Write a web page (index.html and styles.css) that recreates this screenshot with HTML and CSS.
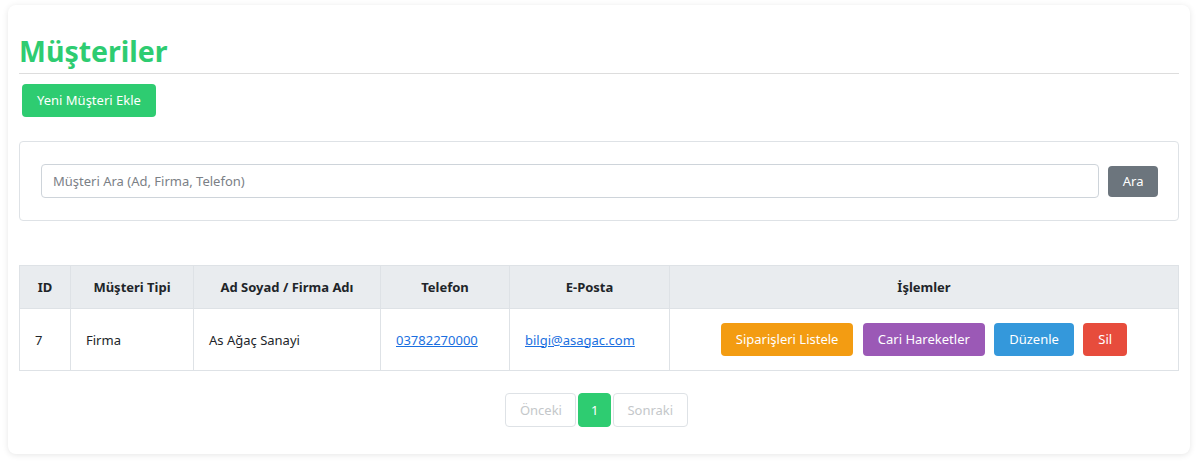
FILE: index.html
```html
<!DOCTYPE html>
<html lang="tr">
<head>
    <meta charset="UTF-8">
    <meta name="viewport" content="width=device-width, initial-scale=1.0">
    <link rel="stylesheet" href="styles.css">
</head>
<body>
    <div class="container">
        <h1 class="page-title">Müşteriler</h1>
        <button type="button" class="btn btn-green add-btn">Yeni Müşteri Ekle</button>

        <!-- Search -->
        <div class="search-card">
            <form class="search-form">
                <input type="text" class="search-input" placeholder="Müşteri Ara (Ad, Firma, Telefon)">
                <button type="submit" class="btn btn-gray">Ara</button>
            </form>
        </div>

        <!-- Customer list -->
        <table class="customer-table">
            <thead>
                <tr>
                    <th class="col-id">ID</th>
                    <th class="col-type">Müşteri Tipi</th>
                    <th class="col-name">Ad Soyad / Firma Adı</th>
                    <th class="col-phone">Telefon</th>
                    <th class="col-mail">E-Posta</th>
                    <th>İşlemler</th>
                </tr>
            </thead>
            <tbody>
                <tr>
                    <td>7</td>
                    <td>Firma</td>
                    <td>As Ağaç Sanayi</td>
                    <td><a href="#">03782270000</a></td>
                    <td><a href="#">bilgi@asagac.com</a></td>
                    <td class="actions">
                        <button type="button" class="btn btn-orange">Siparişleri Listele</button>
                        <button type="button" class="btn btn-purple">Cari Hareketler</button>
                        <button type="button" class="btn btn-blue">Düzenle</button>
                        <button type="button" class="btn btn-red">Sil</button>
                    </td>
                </tr>
            </tbody>
        </table>

        <div class="pagination">
            <span class="page-item disabled">Önceki</span>
            <span class="page-item active">1</span>
            <span class="page-item disabled">Sonraki</span>
        </div>
    </div>
</body>
</html>
```

FILE: styles.css
```css
:root {
    --green: #2ecc71;
    --border: #dee2e6;
    --text: #212529;
}

body {
    font-family: "Noto Sans", "Open Sans", sans-serif;
    font-size: 13px;
    color: var(--text);
    background: #fff;
    margin: 0;
    padding: 5px 8px 10px;
}

.container {
    background: white;
    border-radius: 8px;
    box-shadow: 0 1px 6px rgba(0,0,0,0.1);
    padding: 24px 11px 27px;
}

.page-title {
    color: var(--green);
    font-size: 28.5px;
    line-height: 36px;
    font-weight: bold;
    margin: 0;
    padding: 4px 0 4px;
    border-bottom: 1px solid #dddddd;
}

.btn {
    font-family: inherit;
    font-size: 13px;
    line-height: 17px;
    color: white;
    border: none;
    border-radius: 4px;
    padding: 8px 15px;
    cursor: pointer;
}

.btn-green { background: var(--green); }
.btn-gray { background: #6c757d; padding: 7px 14.5px; }
.btn-orange { background: #f39c12; }
.btn-purple { background: #9b59b6; }
.btn-blue { background: #3498db; }
.btn-red { background: #e74c3c; }

.add-btn {
    display: block;
    margin: 10px 3px 0;
}

.search-card {
    margin-top: 24px;
    border: 1px solid var(--border);
    border-radius: 4px;
    padding: 22px 20px 22px 21px;
}

.search-form {
    display: flex;
    align-items: center;
    gap: 9px;
}

.search-input {
    flex: 1;
    height: 34px;
    box-sizing: border-box;
    padding: 6px 11px;
    font-family: inherit;
    font-size: 13px;
    color: var(--text);
    border: 1px solid #ced4da;
    border-radius: 4px;
}

.search-input::placeholder {
    color: #7b8086;
}

.customer-table {
    width: 100%;
    margin-top: 44px;
    border-collapse: collapse;
}

.customer-table th,
.customer-table td {
    border: 1px solid var(--border);
}

.customer-table th {
    background: #e9ecef;
    font-weight: bold;
    text-align: center;
    padding: 12px 15px;
    line-height: 18px;
}

.customer-table td {
    padding: 14px 15px;
    line-height: 18px;
}

.col-id { width: 20px; }
.col-type { width: 92px; }
.col-name { width: 156px; }
.col-phone { width: 98px; }
.col-mail { width: 129px; }

.customer-table a {
    color: #1a6fe0;
}

.actions {
    text-align: center;
}

.actions .btn {
    margin: 0 3px;
}

.pagination {
    margin-top: 22px;
    padding-right: 5px;
    display: flex;
    justify-content: center;
    gap: 2px;
}

.page-item {
    border: 1px solid var(--border);
    border-radius: 4px;
    padding: 0 13.5px;
    line-height: 32px;
    color: #c4c7ca;
}

.page-item.active {
    background: var(--green);
    border-color: var(--green);
    color: white;
    padding: 0 11.5px;
}
```
